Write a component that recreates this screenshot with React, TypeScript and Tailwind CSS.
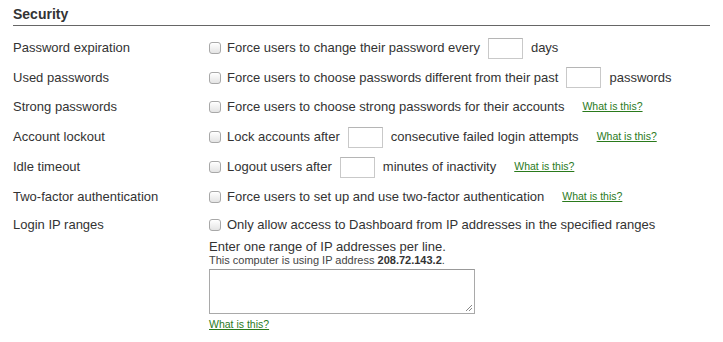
import React from "react";

const Check = () => (
  <span className="inline-block w-[12px] h-[12px] rounded-[3px] border border-[#a8a8a8] bg-gradient-to-b from-white to-[#e4e4e4] shrink-0 mr-[6px] shadow-[inset_0_1px_0_#fff]" />
);

const Box = () => (
  <span className="inline-block w-[35px] h-[21px] border border-[#c9c9c9] border-t-[#b5b5b5] bg-white mx-[8px] shrink-0" />
);

const Link = ({ className = "" }: { className?: string }) => (
  <a className={"text-[10.5px] text-[#2a7a1c] underline ml-[18px] " + className}>What is this?</a>
);

const Row = ({ label, h, children }: { label: string; h: string; children: React.ReactNode }) => (
  <div className={"flex items-center " + h}>
    <div className="w-[196px] shrink-0">{label}</div>
    <div className="flex items-center whitespace-nowrap">{children}</div>
  </div>
);

export default function App() {
  return (
    <div
      className="bg-white w-[723px] h-[342px] text-[13px] text-[#333] pl-[13px] pt-[7px]"
      style={{ fontFamily: '"Liberation Sans", Arial, Helvetica, sans-serif' }}
    >
      <div className="w-[697px] border-b border-[#666] h-[19px] font-bold text-[14px] leading-[15px] text-[#333]">
        Security
      </div>
      <div className="mt-[7px]">
        <Row label="Password expiration" h="h-[30px]">
          <Check />
          <span>Force users to change their password every</span>
          <Box />
          <span>days</span>
        </Row>
        <Row label="Used passwords" h="h-[29px]">
          <Check />
          <span>Force users to choose passwords different from their past</span>
          <Box />
          <span>passwords</span>
        </Row>
        <Row label="Strong passwords" h="h-[30px]">
          <Check />
          <span>Force users to choose strong passwords for their accounts</span>
          <Link />
        </Row>
        <Row label="Account lockout" h="h-[30px]">
          <Check />
          <span>Lock accounts after</span>
          <Box />
          <span>consecutive failed login attempts</span>
          <Link />
        </Row>
        <Row label="Idle timeout" h="h-[30px]">
          <Check />
          <span>Logout users after</span>
          <Box />
          <span>minutes of inactivity</span>
          <Link />
        </Row>
        <Row label="Two-factor authentication" h="h-[29px]">
          <Check />
          <span>Force users to set up and use two-factor authentication</span>
          <Link />
        </Row>
        <Row label="Login IP ranges" h="h-[27px]">
          <Check />
          <span>Only allow access to Dashboard from IP addresses in the specified ranges</span>
        </Row>
        <div className="ml-[196px] mt-[1px]">
          <div className="text-[13px] leading-[15px]">Enter one range of IP addresses per line.</div>
          <div className="text-[11px] leading-[13px] text-[#444]">
            This computer is using IP address <b className="text-[#333]">208.72.143.2</b>.
          </div>
          <div className="relative mt-[2px] w-[266px] h-[45px] border border-[#a9a9a9] border-t-[#999] bg-white">
            <svg className="absolute right-[1px] bottom-[1px]" width="8" height="8" viewBox="0 0 8 8">
              <line x1="7" y1="1" x2="1" y2="7" stroke="#888" strokeWidth="1" />
              <line x1="7" y1="4" x2="4" y2="7" stroke="#888" strokeWidth="1" />
            </svg>
          </div>
          <div className="mt-[4px] leading-[12px]">
            <a className="text-[10.5px] text-[#2a7a1c] underline">What is this?</a>
          </div>
        </div>
      </div>
    </div>
  );
}
